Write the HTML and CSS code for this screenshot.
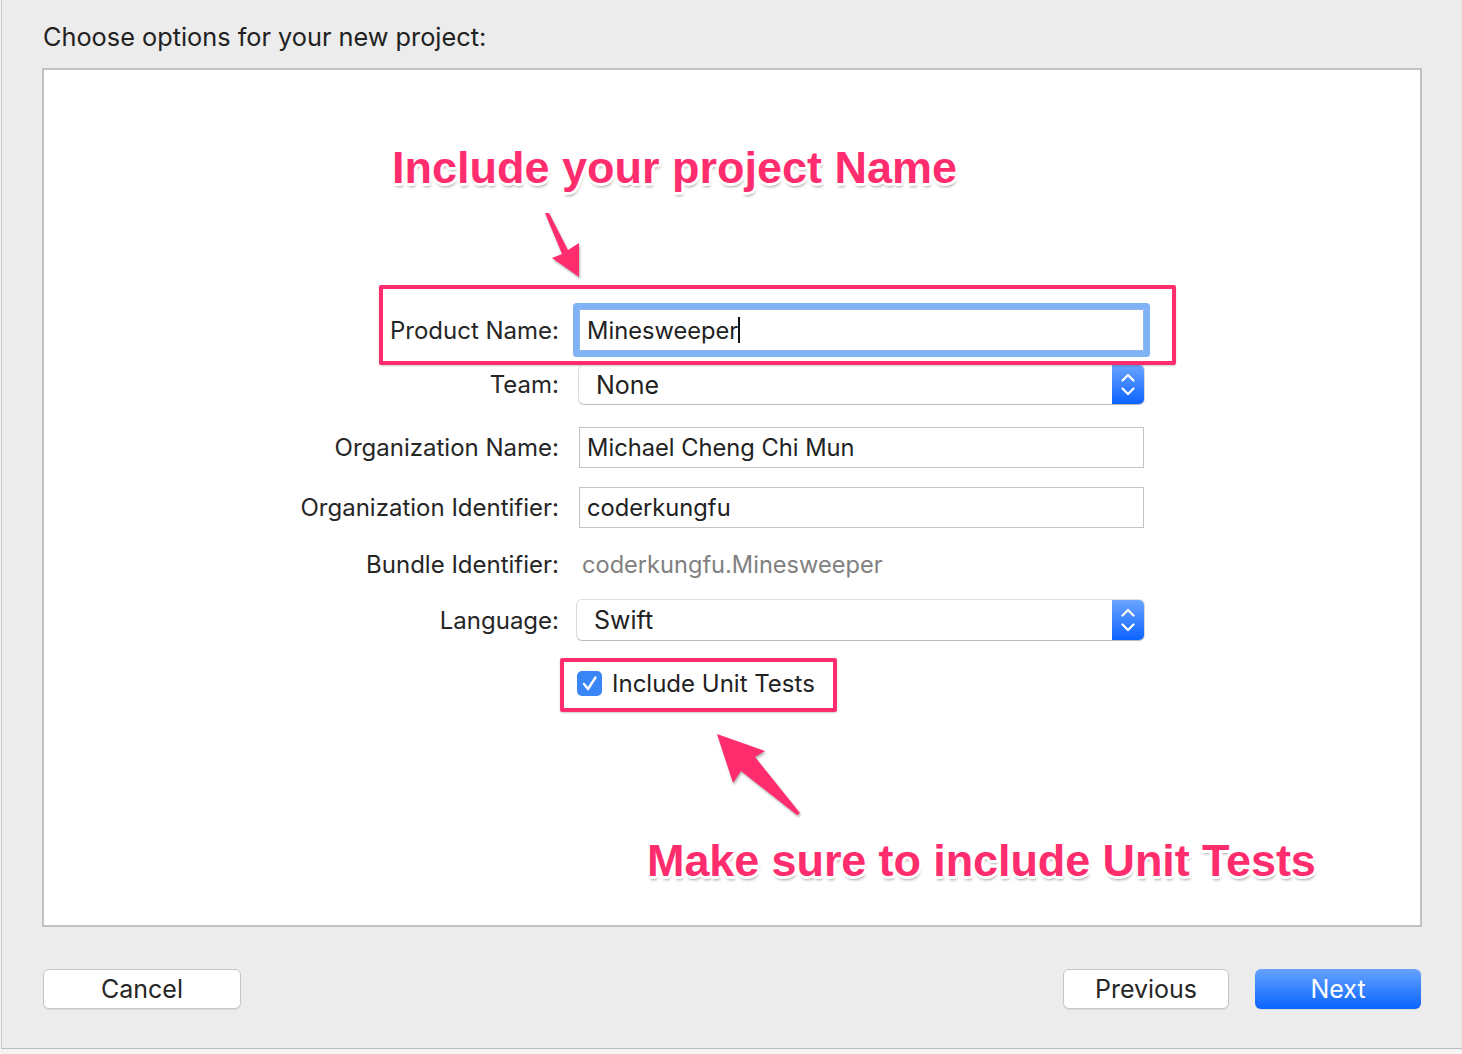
FILE: index.html
```html
<!DOCTYPE html>
<html>
<head>
<meta charset="utf-8">
<link rel="stylesheet" href="styles.css">
</head>
<body>
<div class="window">
  <div class="heading">Choose options for your new project:</div>
  <div class="panel">
    <div class="form">
      <div class="row row-product">
        <div class="label">Product Name:</div>
        <div class="field focused"><span>Minesweeper</span><span class="caret"></span></div>
      </div>
      <div class="row row-team">
        <div class="label">Team:</div>
        <div class="popup">
          <span class="popup-text">None</span>
          <span class="stepper"><svg width="32" height="39" viewBox="0 0 32 39"><path d="M10.5 15.5 L16 10 L21.5 15.5 M10.5 23.5 L16 29 L21.5 23.5" fill="none" stroke="#fff" stroke-width="2.2" stroke-linecap="round" stroke-linejoin="round"/></svg></span>
        </div>
      </div>
      <div class="row row-org">
        <div class="label">Organization Name:</div>
        <div class="field">Michael Cheng Chi Mun</div>
      </div>
      <div class="row row-orgid">
        <div class="label">Organization Identifier:</div>
        <div class="field">coderkungfu</div>
      </div>
      <div class="row row-bundle">
        <div class="label">Bundle Identifier:</div>
        <div class="static">coderkungfu.Minesweeper</div>
      </div>
      <div class="row row-lang">
        <div class="label">Language:</div>
        <div class="popup popup-lang">
          <span class="popup-text">Swift</span>
          <span class="stepper"><svg width="32" height="40" viewBox="0 0 32 40"><path d="M10.5 15.5 L16 10 L21.5 15.5 M10.5 24.5 L16 30 L21.5 24.5" fill="none" stroke="#fff" stroke-width="2.2" stroke-linecap="round" stroke-linejoin="round"/></svg></span>
        </div>
      </div>
      <div class="row row-check">
        <div class="label"></div>
        <div class="check">
          <span class="box"><svg width="25" height="25" viewBox="0 0 25 25"><path d="M7 13 L11 18 L18.5 6.5" fill="none" stroke="#fff" stroke-width="2.4" stroke-linecap="round" stroke-linejoin="round"/></svg></span>
          <span class="check-label">Include Unit Tests</span>
        </div>
      </div>
    </div>

    <div class="note note-top">Include your project Name</div>
    <div class="note note-bottom">Make sure to include Unit Tests</div>
    <div class="hl hl-product"></div>
    <div class="hl hl-check"></div>
    <svg class="arrows" width="1376" height="855" viewBox="44 70 1376 855">
      <polygon points="545,213 549,213 568,250 579,243 579,277 552,258 562,254" fill="#ff2d6e"/>
      <polygon points="717,734 765,751 755,757 800,813 797,815 741,771 733,783" fill="#ff2d6e"/>
    </svg>
  </div>
  <div class="footer">
    <button class="btn btn-cancel">Cancel</button>
    <div class="footer-right">
      <button class="btn btn-prev">Previous</button>
      <button class="btn btn-next">Next</button>
    </div>
  </div>
</div>
</body>
</html>
```
FILE: styles.css
```css
html, body {
  margin: 0;
  padding: 0;
  background: #f4f4f4;
}
body {
  font-family: Inter, "Liberation Sans", sans-serif;
  color: #262626;
}
.window {
  margin-left: 1px;
  width: 1461px;
  height: 1049px;
  box-sizing: border-box;
  border-left: 1px solid #c9c9c9;
  border-bottom: 1px solid #bdbdbd;
  background: #ececec;
  padding: 0 0 0 40px;
}
.heading {
  height: 68px;
  box-sizing: border-box;
  padding-top: 22px;
  font-size: 25.3px;
  line-height: 30px;
  color: #222;
  padding-left: 1px;
}
.panel {
  position: relative;
  width: 1380px;
  height: 859px;
  box-sizing: border-box;
  border: 2px solid #c2c2c2;
  background: #fff;
  padding-top: 239px;
}
.form {
  display: flex;
  flex-direction: column;
}
.row {
  display: flex;
  align-items: center;
}
.label {
  width: 535px;
  flex: none;
  text-align: right;
  font-size: 24px;
  padding-right: 20px;
  box-sizing: border-box;
  color: #262626;
}
.field {
  width: 565px;
  height: 41px;
  box-sizing: border-box;
  border: 1px solid #c4c4c4;
  display: flex;
  align-items: center;
  padding-left: 7px;
  font-size: 23.7px;
  color: #222;
}
.field.focused {
  height: 42px;
  border: 1px solid #8fb4ea;
  box-shadow: 0 0 0 6px #80b2f6;
  border-radius: 1px;
}
.caret {
  display: inline-block;
  width: 2px;
  height: 26px;
  background: #111;
}
.row-product { height: 42px; }
.row-team { height: 39px; margin-top: 14px; }
.row-org { height: 41px; margin-top: 23px; }
.row-orgid { height: 41px; margin-top: 19px; }
.row-bundle { height: 40px; margin-top: 16px; }
.row-lang { height: 40px; margin-top: 16px; }
.row-check { height: 46px; margin-top: 20px; }

.popup {
  width: 565px;
  height: 39px;
  box-sizing: border-box;
  border-radius: 5px;
  background: #fff;
  box-shadow: 0 0 0 1px rgba(0,0,0,0.12), 0 1px 1px rgba(0,0,0,0.18);
  display: flex;
  align-items: center;
  justify-content: space-between;
  overflow: hidden;
  font-size: 25px;
}
.popup-lang {
  width: 567px;
  height: 40px;
  margin-left: -2px;
}
.popup-text {
  padding-left: 17px;
  color: #222;
}
.stepper {
  width: 32px;
  height: 100%;
  flex: none;
  display: flex;
  align-items: center;
  justify-content: center;
  background: linear-gradient(#6aa5ff, #0b63ff);
}
.static {
  padding-left: 3px;
  font-size: 23.6px;
  color: #808080;
}
.check {
  display: flex;
  align-items: center;
  margin-left: -2px;
}
.box {
  width: 25px;
  height: 25px;
  border-radius: 5px;
  background: #3b86f7;
  display: flex;
}
.check-label {
  margin-left: 10px;
  font-size: 24px;
  color: #222;
}

.note {
  position: absolute;
  font-family: "Liberation Sans", Arial, sans-serif;
  font-weight: bold;
  font-size: 45px;
  line-height: 45px;
  color: #ff2d6e;
  white-space: nowrap;
  text-shadow:
    2px 0 0 #fff, -2px 0 0 #fff, 0 2px 0 #fff, 0 -2px 0 #fff,
    2px 2px 0 #fff, -2px -2px 0 #fff, 2px -2px 0 #fff, -2px 2px 0 #fff,
    3px 0 0 #fff, -3px 0 0 #fff, 0 3px 0 #fff, 0 -3px 0 #fff,
    1px 4px 3px rgba(0,0,0,0.35);
}
.note-top {
  left: 348px;
  top: 75px;
}
.note-bottom {
  left: 603px;
  top: 768px;
  letter-spacing: -0.1px;
}
.hl {
  position: absolute;
  border: 4px solid #ff2d6e;
  box-sizing: border-box;
  border-radius: 2px;
  box-shadow: 0 1px 2px rgba(0,0,0,0.2);
}
.hl-product {
  left: 335px;
  top: 215px;
  width: 797px;
  height: 80px;
}
.hl-check {
  left: 516px;
  top: 588px;
  width: 277px;
  height: 54px;
}
.arrows {
  position: absolute;
  left: 0;
  top: 0;
  pointer-events: none;
  filter: drop-shadow(1px 2px 1px rgba(0,0,0,0.3));
}

.footer {
  display: flex;
  justify-content: space-between;
  width: 1380px;
  padding: 42px 1px 0 1px;
  box-sizing: border-box;
}
.footer-right {
  display: flex;
  gap: 26px;
}
.btn {
  height: 40px;
  border-radius: 6px;
  border: 1px solid #c6c6c6;
  background: #fff;
  box-shadow: 0 1px 1px rgba(0,0,0,0.08);
  font-family: Inter, "Liberation Sans", sans-serif;
  font-size: 25px;
  color: #262626;
  padding: 0;
}
.btn-cancel { width: 198px; }
.btn-prev { width: 166px; }
.btn-next {
  width: 166px;
  border: none;
  background: linear-gradient(#66a3ff, #0a64ff);
  color: #fff;
}
```
